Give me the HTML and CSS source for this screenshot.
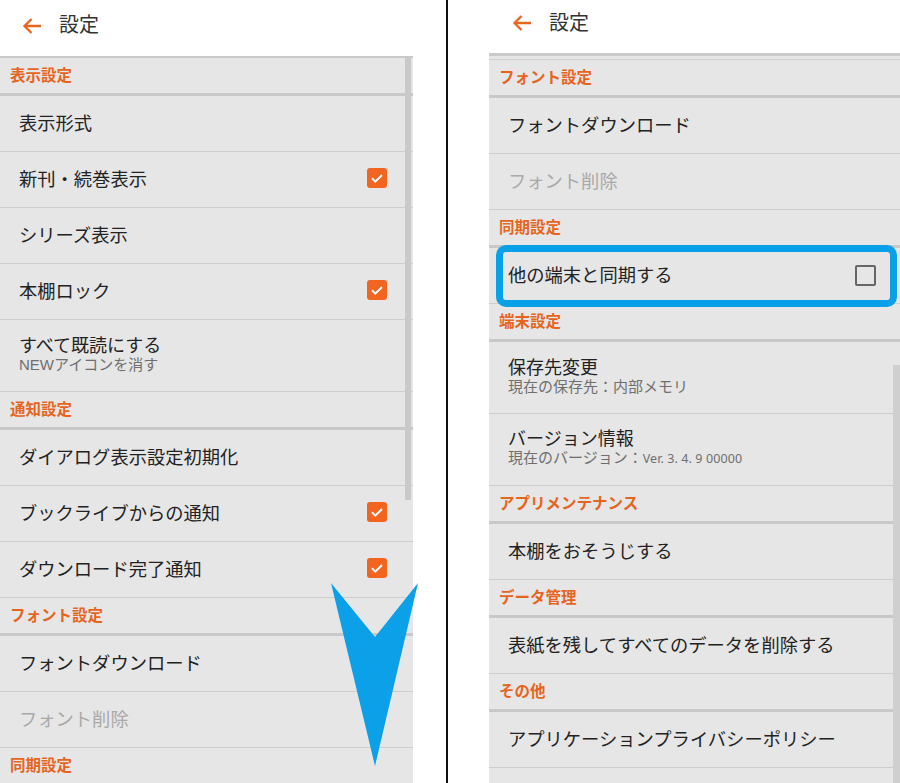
FILE: index.html
```html
<!DOCTYPE html>
<html lang="ja">
<head>
<meta charset="utf-8">
<title>設定</title>
<link rel="stylesheet" href="styles.css">
</head>
<body>
<div class="screen">
  <section class="phone phone-left">
    <header class="appbar">
      <svg class="back" width="20" height="18" viewBox="0 0 20 18"><path d="M19 9H2.5M9.5 2L2.5 9l7 7" fill="none" stroke="#e8661f" stroke-width="2.3"/></svg>
      <h1 class="title">設定</h1>
    </header>
    <div class="list">
      <div class="group-title">表示設定</div>
      <div class="item"><span>表示形式</span></div>
      <div class="item"><span>新刊・続巻表示</span><svg class="check" width="20" height="20" viewBox="0 0 20 20"><rect width="20" height="20" rx="3" fill="#f1651f"/><path d="M5 10.3l3.3 3.3L15 7" fill="none" stroke="#fff" stroke-width="2"/></svg></div>
      <div class="item"><span>シリーズ表示</span></div>
      <div class="item"><span>本棚ロック</span><svg class="check" width="20" height="20" viewBox="0 0 20 20"><rect width="20" height="20" rx="3" fill="#f1651f"/><path d="M5 10.3l3.3 3.3L15 7" fill="none" stroke="#fff" stroke-width="2"/></svg></div>
      <div class="item two-line"><div class="texts"><span class="main">すべて既読にする</span><span class="sub">NEWアイコンを消す</span></div></div>
      <div class="group-title">通知設定</div>
      <div class="item"><span>ダイアログ表示設定初期化</span></div>
      <div class="item"><span>ブックライブからの通知</span><svg class="check" width="20" height="20" viewBox="0 0 20 20"><rect width="20" height="20" rx="3" fill="#f1651f"/><path d="M5 10.3l3.3 3.3L15 7" fill="none" stroke="#fff" stroke-width="2"/></svg></div>
      <div class="item"><span>ダウンロード完了通知</span><svg class="check" width="20" height="20" viewBox="0 0 20 20"><rect width="20" height="20" rx="3" fill="#f1651f"/><path d="M5 10.3l3.3 3.3L15 7" fill="none" stroke="#fff" stroke-width="2"/></svg></div>
      <div class="group-title">フォント設定</div>
      <div class="item"><span>フォントダウンロード</span></div>
      <div class="item disabled"><span>フォント削除</span></div>
      <div class="group-title">同期設定</div>
    </div>
    <div class="scrollbar scrollbar-left"></div>
  </section>

  <div class="divider"></div>

  <section class="phone phone-right">
    <header class="appbar">
      <svg class="back" width="20" height="18" viewBox="0 0 20 18"><path d="M19 9H2.5M9.5 2L2.5 9l7 7" fill="none" stroke="#e8661f" stroke-width="2.3"/></svg>
      <h1 class="title">設定</h1>
    </header>
    <div class="list">
      <div class="scrolled-tail"></div>
      <div class="group-title">フォント設定</div>
      <div class="item"><span>フォントダウンロード</span></div>
      <div class="item disabled"><span>フォント削除</span></div>
      <div class="group-title">同期設定</div>
      <div class="item highlighted"><span>他の端末と同期する</span><span class="box"></span></div>
      <div class="group-title">端末設定</div>
      <div class="item two-line"><div class="texts"><span class="main">保存先変更</span><span class="sub">現在の保存先：内部メモリ</span></div></div>
      <div class="item two-line"><div class="texts"><span class="main">バージョン情報</span><span class="sub">現在のバージョン：<span class="ver">Ver. 3. 4. 9 00000</span></span></div></div>
      <div class="group-title">アプリメンテナンス</div>
      <div class="item"><span>本棚をおそうじする</span></div>
      <div class="group-title">データ管理</div>
      <div class="item"><span>表紙を残してすべてのデータを削除する</span></div>
      <div class="group-title">その他</div>
      <div class="item"><span>アプリケーションプライバシーポリシー</span></div>
      <div class="item"><span></span></div>
    </div>
    <div class="scrollbar scrollbar-right"></div>
  </section>

  <svg class="swipe-arrow" width="88" height="185" viewBox="0 0 88 185"><polygon points="0,0 44,54 87,0 44,183" fill="#0ba0e7"/></svg>
</div>
</body>
</html>
```

FILE: styles.css
```css
* { box-sizing: border-box; }
html, body { margin: 0; padding: 0; background: #fff; }
body {
  font-family: "Noto Sans CJK JP", "Noto Sans", sans-serif;
  color: #222;
}
.screen {
  position: relative;
  display: flex;
  width: 900px;
  height: 783px;
  overflow: hidden;
  background: #fff;
}
.phone {
  position: relative;
  display: flex;
  flex-direction: column;
  overflow: hidden;
}
.phone-left { width: 413px; }
.phone-right { flex: 1; }
.divider {
  width: 2px;
  margin: 0 41px 0 33px;
  background: #111;
}
.appbar {
  display: flex;
  align-items: center;
  gap: 17px;
  padding-left: 22px;
  background: #fff;
  flex: none;
}
.phone-left .appbar { height: 56px; padding-bottom: 8px; }
.phone-right .appbar { height: 53px; padding-bottom: 10px; padding-left: 23px; }
.back { flex: none; margin-top: 3px; }
.title {
  margin: 0;
  font-size: 20px;
  font-weight: 400;
  color: #333;
  line-height: 1;
}
.list {
  flex: 1;
  background: #e6e6e6;
}
.phone-left .list { border-top: 2px solid #c9c9c9; }
.phone-right .list { border-top: 3px solid #c9c9c9; }
.scrolled-tail {
  height: 4px;
  border-bottom: 1px solid #cfcfcf;
}
.group-title {
  display: flex;
  align-items: center;
  height: 38px;
  padding: 0 0 4px 10px;
  border-bottom: 3px solid #c8c8c8;
  font-size: 15.5px;
  font-weight: 700;
  color: #e5651e;
}
.item {
  position: relative;
  display: flex;
  align-items: center;
  justify-content: space-between;
  height: 56px;
  padding: 0 26px 4px 19px;
  border-bottom: 1px solid #cdcdcd;
  font-size: 18.3px;
  color: #222;
}
.phone-right .item { padding-right: 24px; }
.item.two-line { height: 72px; padding-bottom: 1px; }
.item.disabled { color: #a9a9a9; }
.texts {
  display: flex;
  flex-direction: column;
  font-family: "Liberation Sans", "Noto Sans CJK JP", sans-serif;
}
.texts .main { font-size: 18px; line-height: 19px; }
.texts .sub { font-size: 15px; line-height: 18px; color: #6f6f6f; }
.ver {
  font-family: "Noto Sans", sans-serif;
  font-size: 12.5px;
  letter-spacing: 0.1px;
}
.check { flex: none; }
.box {
  flex: none;
  width: 21px;
  height: 21px;
  border: 2px solid #666;
  border-radius: 2px;
  margin-top: 3px;
}
.highlighted::after {
  content: "";
  position: absolute;
  left: 7px;
  right: 3px;
  top: -3px;
  bottom: -4px;
  border: 7px solid #0aa0e8;
  border-radius: 10px;
}
.scrollbar {
  position: absolute;
  width: 6px;
  background: #c9c9c9;
}
.scrollbar-left { right: 2px; top: 58px; height: 442px; }
.scrollbar-right { right: 0; top: 365px; bottom: 0; width: 7px; background: #cfcfcf; }
.swipe-arrow {
  position: absolute;
  left: 331px;
  top: 583px;
}
```
